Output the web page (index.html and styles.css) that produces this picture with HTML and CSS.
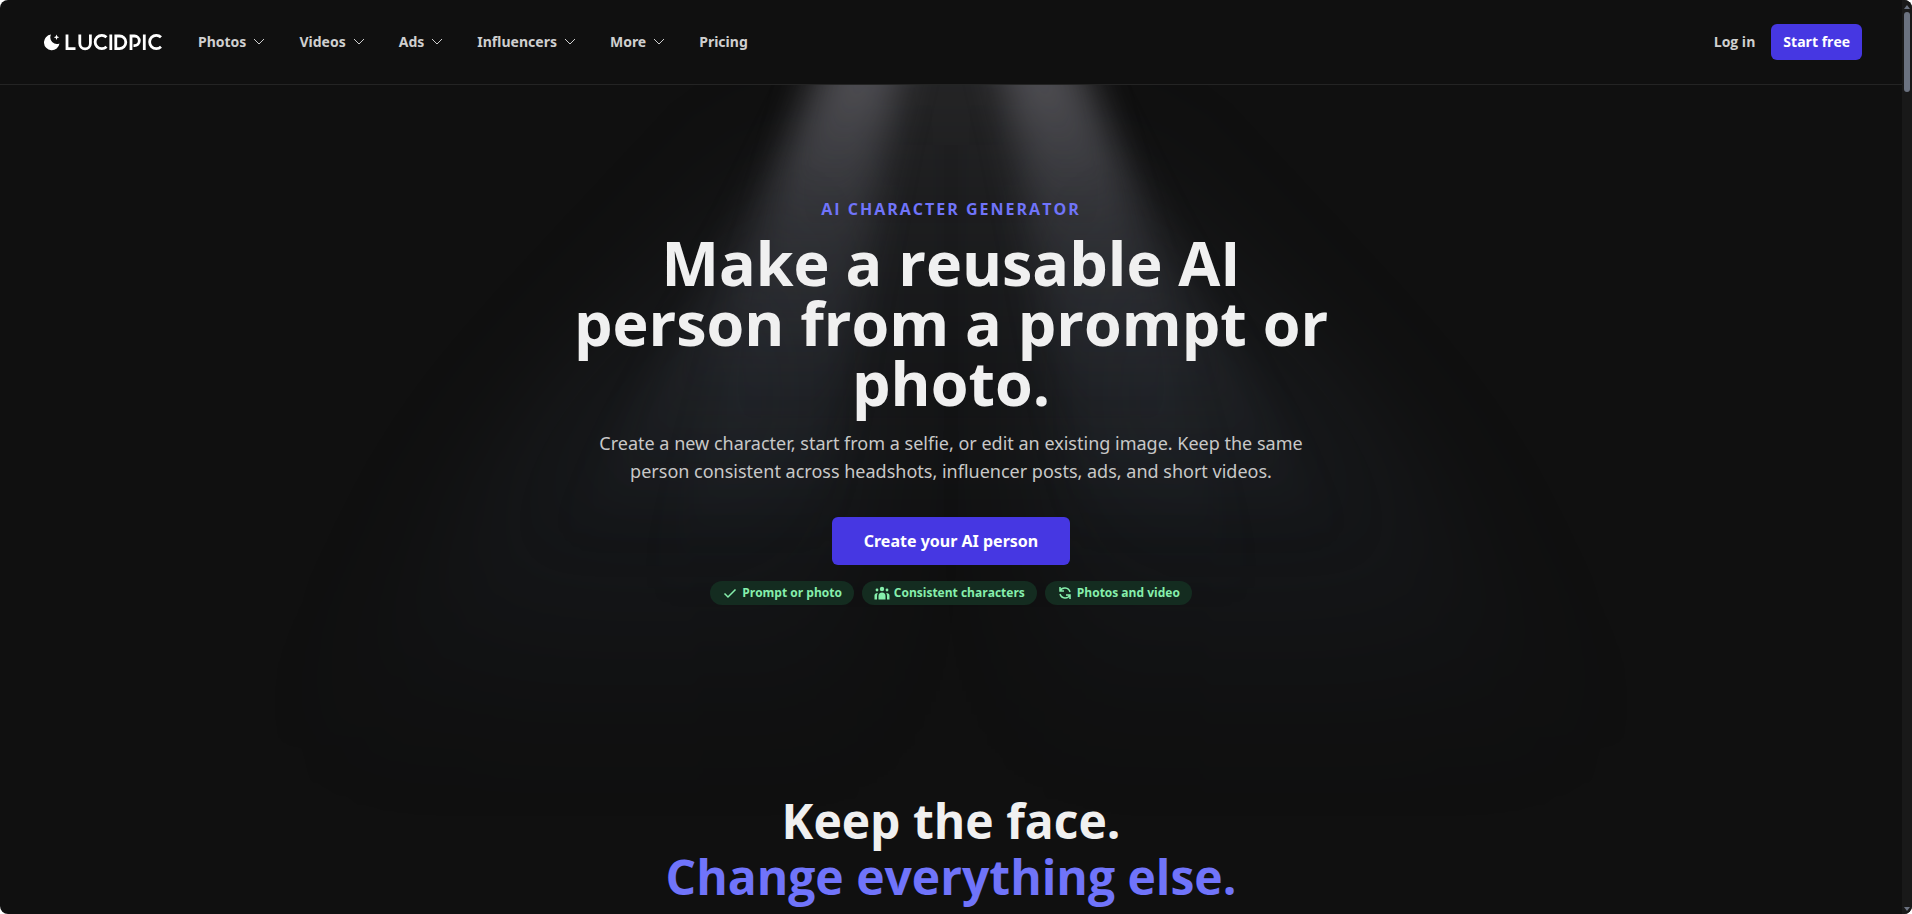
FILE: index.html
```html
<!DOCTYPE html>
<html lang="en">
<head>
<meta charset="utf-8">
<meta name="viewport" content="width=device-width, initial-scale=1">
<title>AI Character Generator | LucidPic</title>
<link rel="stylesheet" href="styles.css">
</head>
<body>
<div class="window">
  <div class="page">
    <header class="topbar">
      <a class="brand" href="#" aria-label="LucidPic">
        <svg class="brand-logo" viewBox="0 0 120 18" fill="none" aria-hidden="true">
          <path d="M7 1.600A6.600 6.600 0 0 0 15.500 10.500 7.800 7.800 0 1 1 7 1.600Z" fill="#fff"/>
          <path d="M12.500 1.400l.8 2 2 .8-2 .8-.8 2-.8-2-2-.8 2-.8Z" fill="#fff"/>
          <g stroke="#fff" stroke-width="2.800">
            <path d="M23 1.500V15.600H31.500"/>
            <path d="M35.800 1.500V10.500a5.300 5.300 0 0 0 10.600 0V1.500"/>
            <path d="M62.500 4.200A6.700 6.700 0 1 0 62.500 13.800"/>
            <path d="M66.800 1.500V17"/>
            <path d="M71.800 3V15.600H75.500a6.300 6.300 0 0 0 0-12.600Z"/>
            <path d="M87 17V3H90.500a4.800 4.800 0 0 1 0 9.600H89.500"/>
            <path d="M100.300 1.500V17"/>
            <path d="M117 4.200A6.700 6.700 0 1 0 117 13.800"/>
          </g>
        </svg>
      </a>
      <nav class="menu" aria-label="Main">
        <button class="menu-item" type="button">Photos <svg class="chevron" viewBox="0 0 12 8"><path d="M1 1l5 5 5-5"/></svg></button>
        <button class="menu-item" type="button">Videos <svg class="chevron" viewBox="0 0 12 8"><path d="M1 1l5 5 5-5"/></svg></button>
        <button class="menu-item" type="button">Ads <svg class="chevron" viewBox="0 0 12 8"><path d="M1 1l5 5 5-5"/></svg></button>
        <button class="menu-item" type="button">Influencers <svg class="chevron" viewBox="0 0 12 8"><path d="M1 1l5 5 5-5"/></svg></button>
        <button class="menu-item" type="button">More <svg class="chevron" viewBox="0 0 12 8"><path d="M1 1l5 5 5-5"/></svg></button>
        <a class="menu-item" href="#">Pricing</a>
      </nav>
      <div class="account">
        <a class="login" href="#">Log in</a>
        <a class="start" href="#">Start free</a>
      </div>
    </header>
    <main>
      <section class="hero">
        <svg class="beams" viewBox="0 0 1902 830" preserveAspectRatio="none" aria-hidden="true">
          <defs>
            <filter id="soft" x="-50%" y="-50%" width="200%" height="200%" color-interpolation-filters="sRGB"><feGaussianBlur stdDeviation="60"/></filter>
            <filter id="tight" x="-50%" y="-50%" width="200%" height="200%" color-interpolation-filters="sRGB"><feGaussianBlur stdDeviation="18"/></filter>
            <linearGradient id="fade" gradientUnits="userSpaceOnUse" x1="0" y1="0" x2="0" y2="460">
              <stop offset="0" stop-color="#8c8a94" stop-opacity=".4"/>
              <stop offset=".3" stop-color="#777884" stop-opacity=".2"/>
              <stop offset=".65" stop-color="#606878" stop-opacity=".09"/>
              <stop offset="1" stop-color="#506070" stop-opacity="0"/>
            </linearGradient>
            <linearGradient id="wide" gradientUnits="userSpaceOnUse" x1="0" y1="100" x2="0" y2="680">
              <stop offset="0" stop-color="#586070" stop-opacity=".08"/>
              <stop offset=".4" stop-color="#586880" stop-opacity=".12"/>
              <stop offset="1" stop-color="#304870" stop-opacity="0"/>
            </linearGradient>
            <linearGradient id="mid" gradientUnits="userSpaceOnUse" x1="0" y1="0" x2="0" y2="520">
              <stop offset="0" stop-color="#88888f" stop-opacity=".17"/>
              <stop offset=".5" stop-color="#60687a" stop-opacity=".09"/>
              <stop offset="1" stop-color="#506070" stop-opacity="0"/>
            </linearGradient>
          </defs>
          <path d="M840-100H1062L1250 520H652Z" fill="url(#mid)" filter="url(#tight)"/>
          <path d="M850 60L840 300 860 680H300L480 400 780 60Z" fill="url(#wide)" filter="url(#soft)"/>
          <path d="M1052 60L1062 300 1042 680H1602L1422 400 1122 60Z" fill="url(#wide)" filter="url(#soft)"/>
          <path d="M870-100H920L885 60 820 460H560L750 130Z" fill="url(#fade)" filter="url(#tight)"/>
          <path d="M1032-100H982L1017 60 1082 460H1342L1152 130Z" fill="url(#fade)" filter="url(#tight)"/>
        </svg>
        <div class="hero-copy">
          <p class="eyebrow">AI CHARACTER GENERATOR</p>
          <h1 class="title">Make a reusable AI person from a prompt or photo.</h1>
          <p class="lead">Create a new character, start from a selfie, or edit an existing image. Keep the same person consistent across headshots, influencer posts, ads, and short videos.</p>
          <a class="cta" href="#">Create your AI person</a>
          <ul class="tags">
            <li class="tag"><svg class="tag-icon" viewBox="0 0 16 16"><path d="M2.500 8.500l3.500 3.500 7.500-7.500" class="line"/></svg>Prompt or photo</li>
            <li class="tag"><svg class="tag-icon" viewBox="0 0 16 16" fill="currentColor"><circle cx="8" cy="4" r="2.200"/><circle cx="3" cy="5" r="1.400"/><circle cx="13" cy="5" r="1.400"/><path d="M4.500 14.500V11a3.500 3.500 0 0 1 7 0v3.500ZM.5 14.500V10.500Q.5 8 3.800 8 3 9.500 3 11v3.500ZM15.500 14.500V10.500Q15.500 8 12.200 8 13 9.500 13 11v3.500Z"/></svg>Consistent characters</li>
            <li class="tag"><svg class="tag-icon" viewBox="0 0 16 16"><path d="M3 2V6H7M3 6A5.400 5.400 0 0 1 13 7M13 14V10H9M13 10A5.400 5.400 0 0 1 3 9" class="line"/></svg>Photos and video</li>
          </ul>
        </div>
      </section>
      <section class="promise">
        <h2 class="promise-title">Keep the face. <span class="accent">Change everything else.</span></h2>
      </section>
    </main>
  </div>
  <div class="scrollbar" aria-hidden="true">
    <svg class="arrow" viewBox="0 0 6 4"><path d="M3 0l3 4H0Z"/></svg>
    <div class="thumb"></div>
    <svg class="arrow arrow-down" viewBox="0 0 6 4"><path d="M0 0h6L3 4Z"/></svg>
  </div>
</div>
</body>
</html>
```
FILE: styles.css
```css
* { box-sizing: border-box; }

body {
  margin: 0;
  background: #fff;
  color: #f0f0f0;
  font-family: "Open Sans", "Noto Sans", sans-serif;
}

.window {
  display: flex;
  height: 100vh;
  overflow: hidden;
  border-radius: 8px;
  background: #101010;
}

.page { flex: 1; min-width: 0; overflow: hidden; }

.topbar {
  display: flex;
  align-items: center;
  height: 85px;
  padding: 0 40px 0 44px;
  border-bottom: 1px solid #242424;
}

.brand { display: flex; margin-right: 34px; }
.brand-logo { width: 120px; height: 18px; }

.menu { display: flex; gap: 34px; }

.menu-item {
  display: flex;
  align-items: center;
  gap: 7px;
  padding: 0;
  border: 0;
  background: none;
  color: #cfcfcf;
  font: 700 14px/24px "Noto Sans", "Open Sans", sans-serif;
  text-decoration: none;
}

.chevron { width: 12px; height: 8px; fill: none; stroke: currentColor; stroke-width: 1; }

.account { display: flex; align-items: center; gap: 16px; margin-left: auto; }

.login, .start {
  color: #cfcfcf;
  font-size: 14px;
  font-weight: 700;
  line-height: 36px;
  text-decoration: none;
}

.start { padding: 0 12px; border-radius: 6px; background: #4637e2; color: #fff; }

.hero { position: relative; padding: 112px 24px 0; }

.beams {
  position: absolute;
  inset: 0 0 auto;
  width: 100%;
  height: 830px;
}

.hero-copy {
  position: relative;
  display: flex;
  flex-direction: column;
  align-items: center;
  max-width: 768px;
  margin: 0 auto;
  text-align: center;
}

.eyebrow {
  margin: 0;
  color: #7074fa;
  font-size: 16px;
  font-weight: 700;
  line-height: 24px;
  letter-spacing: 2px;
}

.title { margin: 12px 0 0; font-size: 61px; font-weight: 700; line-height: 60px; }

.lead {
  max-width: 750px;
  margin: 16px 0 0;
  color: #c8c8c8;
  font-family: "Noto Sans", "Open Sans", sans-serif;
  font-size: 18px;
  line-height: 28px;
}

.cta {
  margin-top: 32px;
  padding: 0 32px;
  border-radius: 6px;
  background: #4637e2;
  color: #fff;
  font-family: "Noto Sans", "Open Sans", sans-serif;
  font-size: 16px;
  font-weight: 700;
  line-height: 48px;
  text-decoration: none;
}

.tags { display: flex; gap: 8px; margin: 16px 0 0; padding: 0; list-style: none; }

.tag {
  display: flex;
  align-items: center;
  gap: 4px;
  padding: 0 12px;
  border-radius: 12px;
  background: #142c20;
  color: #86efac;
  font-size: 12px;
  font-weight: 700;
  line-height: 24px;
}

.tag-icon { width: 16px; height: 16px; }
.line { fill: none; stroke: currentColor; stroke-width: 1.500; }

.promise { position: relative; padding-top: 188px; text-align: center; }
.promise-title { margin: 0; font-size: 48px; font-weight: 700; line-height: 56px; }
.accent { display: block; color: #7074fa; }

.scrollbar {
  display: flex;
  flex-direction: column;
  align-items: center;
  width: 10px;
  padding: 5px 0 3px;
  background: #191919;
}

.arrow { width: 6px; height: 4px; fill: #6b7280; }
.arrow-down { margin-top: auto; }
.thumb { width: 6px; height: 80px; margin-top: 3px; border-radius: 3px; background: #6b7280; }
```
